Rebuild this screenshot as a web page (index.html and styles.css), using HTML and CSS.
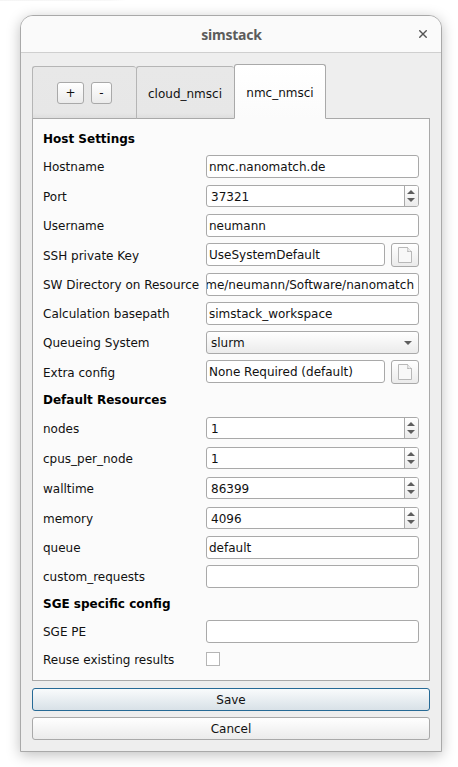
FILE: index.html
```html
<!DOCTYPE html>
<html lang="en">
<head>
<meta charset="utf-8">
<title>simstack</title>
<link rel="stylesheet" href="styles.css">
</head>
<body>
<svg class="defs" width="0" height="0">
  <defs>
    <symbol id="file" viewBox="0 0 14 16"><path d="M.5 .5H9.5L13.5 4.5V15.5H.5Z" fill="#f8f8f8" stroke="#b8b8b8"/><path d="M9.5 .5C10 2 10 3.5 9.5 4.5C11 4.2 12.5 4.2 13.5 4.5" fill="#fff" stroke="#a8a8a8" stroke-width=".9"/></symbol>
    <symbol id="arrows" viewBox="0 0 8 12"><path d="M0 4L4 0L8 4ZM0 8H8L4 12Z" fill="#5e5e5e"/></symbol>
  </defs>
</svg>
<main class="window">
  <header class="titlebar"><span class="title">simstack</span><svg class="close" width="8" height="8" viewBox="0 0 8 8"><path d="M.3 .3L7.7 7.7M7.7 .3L.3 7.7" stroke="#555" stroke-width="1.4"/></svg></header>
  <div class="content">
    <nav class="tabs">
      <div class="tab tools"><button class="btn plus">+</button><button class="btn minus">-</button></div>
      <div class="tab cloud">cloud_nmsci</div>
      <div class="tab active">nmc_nmsci</div>
    </nav>
    <section class="panel">
      <h2>Host Settings</h2>
      <div class="row"><label>Hostname</label><div class="field">nmc.nanomatch.de</div></div>
      <div class="row tall"><label>Port</label><div class="field spin"><span>37321</span><i><svg width="8" height="12"><use href="#arrows"/></svg></i></div></div>
      <div class="row"><label>Username</label><div class="field">neumann</div></div>
      <div class="row tall file"><label>SSH private Key</label><div class="field">UseSystemDefault</div><button class="btn browse"><svg width="14" height="16"><use href="#file"/></svg></button></div>
      <div class="row"><label>SW Directory on Resource</label><div class="field scrolled"><span>me/neumann/Software/nanomatch</span></div></div>
      <div class="row"><label>Calculation basepath</label><div class="field">simstack_workspace</div></div>
      <div class="row"><label>Queueing System</label><div class="field combo"><span>slurm</span><svg width="8" height="4" viewBox="0 0 8 4"><path d="M0 0H8L4 4Z" fill="#5e5e5e"/></svg></div></div>
      <div class="row tall file"><label>Extra config</label><div class="field">None Required (default)</div><button class="btn browse"><svg width="14" height="16"><use href="#file"/></svg></button></div>
      <h2>Default Resources</h2>
      <div class="row tall"><label>nodes</label><div class="field spin"><span>1</span><i><svg width="8" height="12"><use href="#arrows"/></svg></i></div></div>
      <div class="row tall"><label>cpus_per_node</label><div class="field spin"><span>1</span><i><svg width="8" height="12"><use href="#arrows"/></svg></i></div></div>
      <div class="row tall"><label>walltime</label><div class="field spin"><span>86399</span><i><svg width="8" height="12"><use href="#arrows"/></svg></i></div></div>
      <div class="row tall"><label>memory</label><div class="field spin"><span>4096</span><i><svg width="8" height="12"><use href="#arrows"/></svg></i></div></div>
      <div class="row"><label>queue</label><div class="field">default</div></div>
      <div class="row"><label>custom_requests</label><div class="field"></div></div>
      <h2>SGE specific config</h2>
      <div class="row"><label>SGE PE</label><div class="field"></div></div>
      <div class="row check"><label>Reuse existing results</label><div class="checkbox"></div></div>
    </section>
    <button class="btn action save">Save</button>
    <button class="btn action">Cancel</button>
  </div>
</main>
</body>
</html>
```
FILE: styles.css
```css
* { box-sizing: border-box; }
body {
  margin: 0;
  height: 767px;
  padding: 15px 16px 15px 20px;
  overflow: hidden;
  background: linear-gradient(90deg, #f5f5f5, #f8f8f8 110px, #fff 126px) 0 0 / 126px 1px no-repeat #fff;
  font: 12px/14px "DejaVu Sans", sans-serif;
  color: #111;
}
.defs { position: absolute; }
svg { display: block; }
.window {
  width: 422px;
  height: 737px;
  border: 1px solid #a9a9a9;
  border-radius: 13px 13px 0 0;
  background: #eee;
  overflow: hidden;
  box-shadow: 0 3px 14px rgba(0, 0, 0, .25);
}
.titlebar {
  display: flex;
  align-items: center;
  justify-content: flex-end;
  height: 37px;
  padding-right: 14px;
  border-bottom: 1px solid #cfcfcf;
  background: #fafafa;
}
.title {
  flex: 1;
  padding: 2px 0 0 23px;
  text-align: center;
  font: bold 14px/18px "Noto Sans", sans-serif;
  letter-spacing: -.2px;
  color: #5c5c5c;
}
.content { padding: 11px 11px 0; }
.tabs { display: flex; align-items: flex-end; height: 55px; }
.tab {
  display: flex;
  align-items: center;
  justify-content: center;
  height: 53px;
  border: 1px solid #b5b5b5;
  border-bottom-color: #a9a9a9;
  border-radius: 3px 3px 0 0;
  background: linear-gradient(#e8e8e8, #e7e7e7 90%, #dedede);
}
.tools { width: 104px; gap: 7px; border-right: 0; }
.cloud { width: 98px; border-right: 0; padding: 2px 1px 0 0; }
.active {
  z-index: 1;
  width: 92px;
  height: 55px;
  padding-top: 2px;
  border-color: #a9a9a9;
  border-bottom-color: #fbfbfb;
  background: linear-gradient(#fff, #fbfbfb);
}
.btn {
  display: flex;
  align-items: center;
  justify-content: center;
  padding: 0;
  border: 1px solid #a9a9a9;
  border-radius: 3px;
  background: linear-gradient(#fff, #ebebeb);
  font: inherit;
  color: #111;
}
.plus { width: 27px; height: 22px; padding-top: 1px; }
.minus { width: 21px; height: 22px; padding-top: 1px; }
.panel {
  display: flex;
  flex-direction: column;
  gap: 6px;
  height: 563px;
  margin-top: -1px;
  padding: 10px;
  border: 1px solid #a9a9a9;
  background: #fbfbfb;
}
h2 { margin: 0; height: 20px; font-size: 12px; line-height: 20px; color: #000; }
.row {
  display: grid;
  grid-template-columns: 157px 213px;
  column-gap: 6px;
  height: 23px;
}
.row.file { grid-template-columns: 157px 179px 28px; }
.row.tall { height: 24px; }
label { height: 23px; padding-top: 1px; line-height: 23px; white-space: nowrap; }
.tall label { line-height: 24px; }
.field {
  display: flex;
  align-items: center;
  height: 23px;
  padding: 0 2px;
  border: 1px solid #a9a9a9;
  border-radius: 3px;
  background: #fff;
  white-space: nowrap;
  overflow: hidden;
}
.spin { height: 22px; margin-top: 1px; padding: 0 0 0 4px; justify-content: space-between; }
.spin span { padding-top: 2px; }
.spin i {
  display: flex;
  align-items: center;
  width: 14px;
  height: 20px;
  padding-left: 2px;
  border-left: 1px solid #a9a9a9;
  background: linear-gradient(#fff, #ebebeb);
}
.scrolled { justify-content: flex-end; padding: 0 4px 0 0; }
.combo { justify-content: space-between; padding: 0 6px 0 4px; background: linear-gradient(#fff, #ebebeb); }
.browse { width: 28px; height: 24px; }
.row.check { height: 20px; }
.check label { line-height: 20px; }
.checkbox { width: 14px; height: 14px; margin-top: 3px; border: 1px solid #b5b5b5; background: #fff; }
.action { width: 398px; height: 23px; margin-top: 6px; }
.save { margin-top: 7px; border-color: #266a96; background: linear-gradient(#f9fbfc, #d8e1e7); }
```
